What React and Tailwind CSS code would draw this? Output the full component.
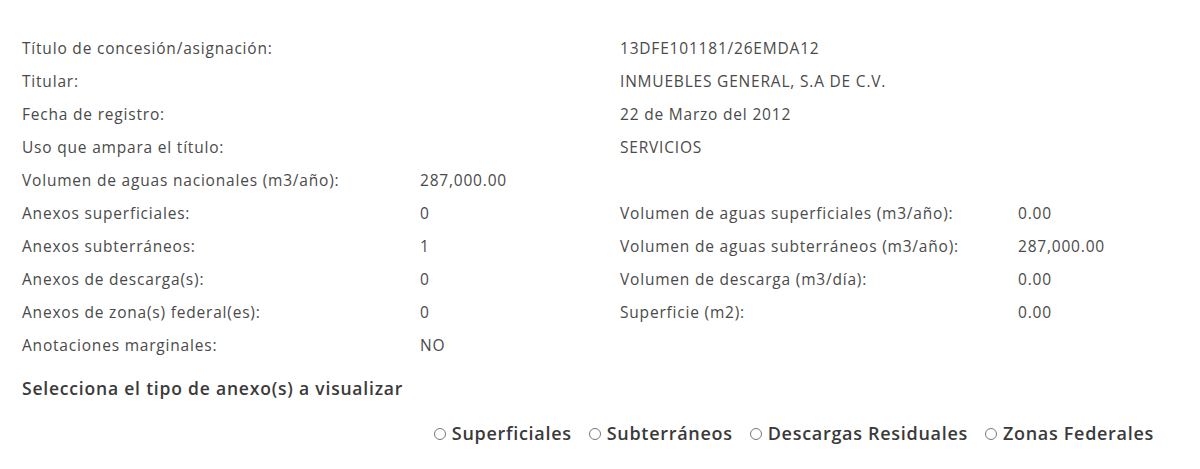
const rows = [
    ["Título de concesión/asignación:", null, "13DFE101181/26EMDA12", null],
    ["Titular:", null, "INMUEBLES GENERAL, S.A DE C.V.", null],
    ["Fecha de registro:", null, "22 de Marzo del 2012", null],
    ["Uso que ampara el título:", null, "SERVICIOS", null],
    ["Volumen de aguas nacionales (m3/año):", "287,000.00", null, null],
    ["Anexos superficiales:", "0", "Volumen de aguas superficiales (m3/año):", "0.00"],
    ["Anexos subterráneos:", "1", "Volumen de aguas subterráneos (m3/año):", "287,000.00"],
    ["Anexos de descarga(s):", "0", "Volumen de descarga (m3/día):", "0.00"],
    ["Anexos de zona(s) federal(es):", "0", "Superficie (m2):", "0.00"],
    ["Anotaciones marginales:", "NO", null, null],
];

const options = ["Superficiales", "Subterráneos", "Descargas Residuales", "Zonas Federales"];

export default function App() {
    return (
        <div className="min-h-screen bg-white pt-[32px] pl-[22px] pr-[46px] text-[#4a4a4a] font-['Open_Sans',sans-serif]">
            <div className="grid grid-cols-[398px_200px_398px_1fr] text-[15.5px] tracking-[0.8px]">
                {rows.map((r, i) => (
                    <div key={i} className="contents">
                        {r.map((cell, j) => (
                            <div key={j} className="h-[33px] leading-[33px] whitespace-nowrap">
                                {cell}
                            </div>
                        ))}
                    </div>
                ))}
            </div>
            <h2 className="mt-[14px] text-[17.5px] tracking-[0.8px] font-semibold text-[#3a3a3a] leading-[24px]">
                Selecciona el tipo de anexo(s) a visualizar
            </h2>
            <div className="mt-[20px] flex justify-end gap-[17px] text-[18px] tracking-[0.7px] font-semibold text-[#3a3a3a]">
                {options.map((o) => (
                    <label key={o} className="flex items-center gap-[6px]">
                        <span className="w-[12px] h-[12px] rounded-full border border-[#777] bg-white"></span>
                        {o}
                    </label>
                ))}
            </div>
        </div>
    );
}
